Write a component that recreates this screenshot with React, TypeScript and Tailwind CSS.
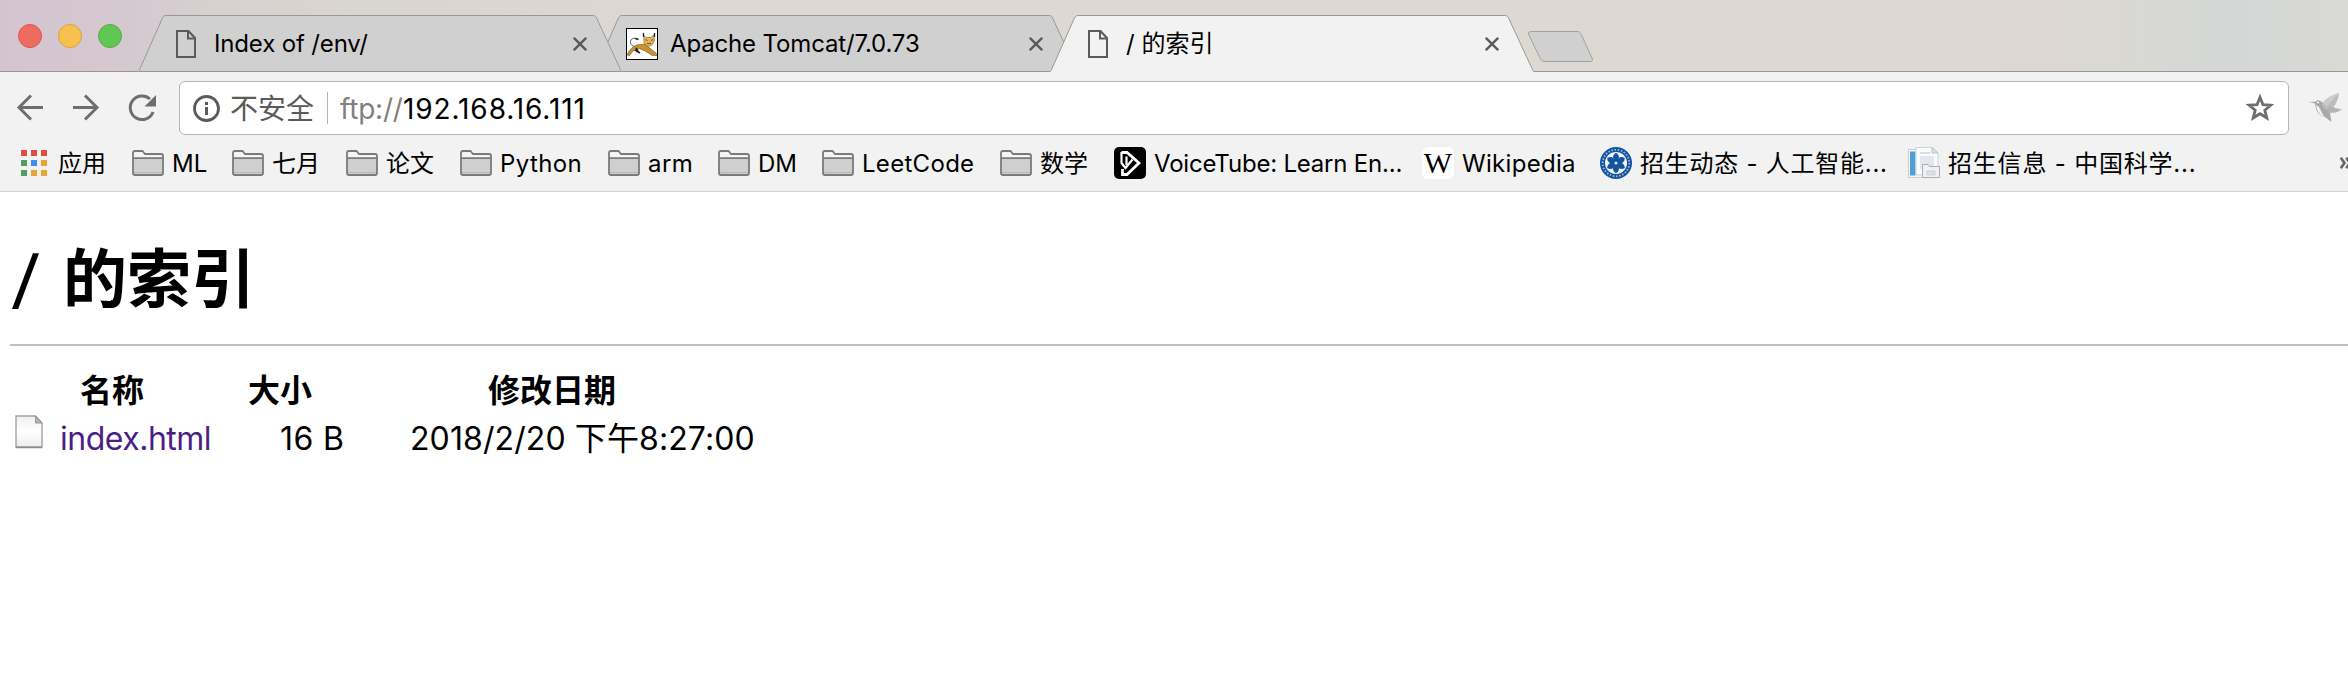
import type { ReactNode } from "react";

function PageIcon() {
  return (
    <svg className="ml-[6px] h-[28px] w-[20px] shrink-0" viewBox="0 0 20 28" fill="none" stroke="#5a5a5a" strokeWidth="2">
      <path d="M1 1H12.500L19 8V27H1Z" />
      <path d="M12 1V8.500H19" />
    </svg>
  );
}

function CloseIcon() {
  return (
    <svg className="h-[14px] w-[14px] shrink-0" viewBox="0 0 14 14" stroke="#5a5a5a" strokeWidth="2.4">
      <path d="M.8.8 13.2 13.2M13.2.8.8 13.2" />
    </svg>
  );
}

function TomcatIcon() {
  return (
    <svg className="h-[32px] w-[32px] shrink-0" viewBox="0 0 32 32">
      <rect x=".5" y=".5" width="31" height="31" fill="#fff" stroke="#000" />
      <path d="M1 27C3 22 8 16.500 14 16.500L19 16 23 19.500 30 25 31 27.500H26L20 23.500 13 20.500 7 23 3.500 27.500Z" fill="#c8922e" stroke="#5b4526" strokeWidth=".5" />
      <path d="M17.500 7 20 9.500H25L28 6.500 28.500 13 26 17 22 18.500 18 15Z" fill="#e6b450" stroke="#6b5330" strokeWidth=".5" />
      <path d="M17.500 5V9M28.500 5V9" stroke="#222" strokeWidth="1.300" />
      <path d="M19.500 11.500l2 1M27 11.500l-2 1M21 15.500h4" stroke="#5f4a20" strokeWidth=".9" />
      <path d="M11.500 11C8 9 4 11 4.500 14.500S8 18 8.500 18.500" fill="none" stroke="#555" strokeWidth="1" />
      <path d="M9.500 10.500 12.500 11.500M9 22l5 3M10 20l2 3" stroke="#222" strokeWidth="1.600" />
    </svg>
  );
}

type TabProps = { icon: ReactNode; title: string; active?: boolean; tracking: string; layer: string };

function Tab({ icon, title, active, tracking, layer }: TabProps) {
  return (
    <div className={`relative -mr-[28px] h-[57px] w-[484px] shrink-0 ${layer}`}>
      <svg className="absolute inset-0 h-[57px] w-[484px]" viewBox="0 0 484 57">
        <path
          d="M0 56.500C1 56 1.500 55 2 53.500L24 4C25 1.500 26 .5 28 .5H455C457 .5 458 1.500 459 4L482 53.500C482.500 55 483 56 484 56.500V57H0Z"
          fill={active ? "#f2f2f2" : "#d0d0d0"}
        />
        <path
          d="M0 56.500C1 56 1.500 55 2 53.500L24 4C25 1.500 26 .5 28 .5H455C457 .5 458 1.500 459 4L482 53.500C482.500 55 483 56 484 56.500"
          fill="none"
          stroke="#9b9894"
        />
        <path d="M1 56.500H483" stroke={active ? "#f2f2f2" : "#9a958f"} />
      </svg>
      <div className="relative flex h-[57px] items-center pr-[35px] pl-[32px]">
        <div className="flex w-[44px] shrink-0 justify-start">{icon}</div>
        <span className={`flex-1 whitespace-pre text-[24px] leading-[30px] ${tracking}`}>{title}</span>
        <CloseIcon />
      </div>
    </div>
  );
}

function Folder() {
  return (
    <svg className="h-[26px] w-[32px]" viewBox="0 0 32 26">
      <path d="M1 23V3Q1 1 3 1H10.500L13 4H29Q31 4 31 6V23Q31 25 29 25H3Q1 25 1 23Z" fill="#f4f4f4" />
      <path d="M1 8H31V23Q31 25 29 25H3Q1 25 1 23Z" fill="#cfcfcf" />
      <path d="M2 22.500H30" stroke="#b8b8b8" />
      <path d="M1 23V3Q1 1 3 1H10.500L13 4H29Q31 4 31 6V23Q31 25 29 25H3Q1 25 1 23ZM1 8.200H31" fill="none" stroke="#7a7a7a" strokeWidth="1.800" />
    </svg>
  );
}

function AppsIcon() {
  const colors = ["#e64b3f", "#e64b3f", "#e64b3f", "#529d5f", "#3f8cf4", "#e9a535", "#529d5f", "#e9a535", "#e9a535"];
  return (
    <svg className="h-[26px] w-[28px]" viewBox="0 0 28 26">
      {colors.map((c, i) => (
        <rect key={i} x={1 + (i % 3) * 10} y={Math.floor(i / 3) * 10} width="6" height="6" fill={c} />
      ))}
    </svg>
  );
}

function VoiceTubeIcon() {
  return (
    <svg className="h-[32px] w-[32px]" viewBox="0 0 32 32">
      <rect width="32" height="32" rx="5" fill="#000" />
      <path d="M7.500 5.500H13L25 16 13 27.500H8.500V22" fill="none" stroke="#fff" strokeWidth="2.800" />
      <path d="M7.500 5V16L11.500 21 18.500 12.500M12.500 9.500V18" fill="none" stroke="#fff" strokeWidth="2.200" />
    </svg>
  );
}

function WikipediaIcon() {
  return (
    <div className="flex h-[32px] w-[32px] items-center justify-center rounded-[6px] bg-white">
      <span className="font-['Liberation_Serif',serif] text-[30px] leading-[32px]">W</span>
    </div>
  );
}

function AcademyIcon() {
  return (
    <svg className="h-[32px] w-[32px]" viewBox="0 0 32 32">
      <circle cx="16" cy="16" r="16" fill="#1453a0" />
      <circle cx="16" cy="16" r="13.300" fill="none" stroke="#9dbbe0" strokeWidth="1.800" strokeDasharray="1.500 1.700" />
      <circle cx="16" cy="16" r="11" fill="#f4f8fd" />
      {[0, 60, 120, 180, 240, 300].map((a) => (
        <path key={a} d="M16 15C12 12 12 8.500 16 5.800C20 8.500 20 12 16 15Z" fill="#1453a0" transform={`rotate(${a} 16 16)`} />
      ))}
      <circle cx="16" cy="16" r="3.400" fill="#1453a0" />
      <circle cx="16" cy="16" r="1.600" fill="#cfe0f4" />
    </svg>
  );
}

function PagesIcon() {
  return (
    <svg className="h-[32px] w-[32px]" viewBox="0 0 32 32">
      <rect x=".5" y="2.500" width="24" height="28" fill="#f5f6f8" stroke="#c9ccd2" />
      <rect x="2" y="4.500" width="5.500" height="24" fill="#4e9fd6" />
      <path d="M8 .5H24L30 6V28H8Z" fill="#fafbfc" stroke="#cfd2d8" />
      <path d="M24 .5V6H30Z" fill="#dfe2e7" stroke="#b4b8c0" strokeWidth=".8" />
      <rect x="12" y="9" width="14" height="13" fill="#e3e7ee" />
      <path d="M12 6h10" stroke="#d9dde4" strokeWidth="2" />
      <path d="M14.500 30.500V17.500H20L21.500 19.500H31.500V30.500Z" fill="#eff1f5" stroke="#a9aeb8" />
      <rect x="19" y="24" width="8" height="4" fill="#dde1e8" stroke="#c4c9d2" strokeWidth=".7" />
    </svg>
  );
}

type Mark = { icon: ReactNode; label: string; box: string; tracking?: string };

const marks: Mark[] = [
  { icon: <AppsIcon />, label: "应用", box: "w-[112px] gap-[10px]" },
  { icon: <Folder />, label: "ML", box: "w-[100px] gap-2" },
  { icon: <Folder />, label: "七月", box: "w-[114px] gap-2" },
  { icon: <Folder />, label: "论文", box: "w-[114px] gap-2" },
  { icon: <Folder />, label: "Python", box: "w-[148px] gap-2", tracking: "tracking-[0.4px]" },
  { icon: <Folder />, label: "arm", box: "w-[110px] gap-2", tracking: "tracking-[0.4px]" },
  { icon: <Folder />, label: "DM", box: "w-[104px] gap-2" },
  { icon: <Folder />, label: "LeetCode", box: "w-[178px] gap-2", tracking: "tracking-[0.3px]" },
  { icon: <Folder />, label: "数学", box: "w-[114px] gap-2" },
  { icon: <VoiceTubeIcon />, label: "VoiceTube: Learn En...", box: "w-[308px] gap-2", tracking: "tracking-[-0.2px]" },
  { icon: <WikipediaIcon />, label: "Wikipedia", box: "w-[178px] gap-2", tracking: "tracking-[0.3px]" },
  { icon: <AcademyIcon />, label: "招生动态 - 人工智能...", box: "w-[308px] gap-2", tracking: "tracking-[0.75px]" },
  { icon: <PagesIcon />, label: "招生信息 - 中国科学...", box: "w-[432px] gap-2", tracking: "tracking-[0.8px]" },
];

function TabStrip() {
  return (
    <div className="flex h-[72px] items-start bg-[linear-gradient(90deg,#d4c4d0_0px,#d5c9d0_130px,#d8d3d0_260px,#dad6cf_420px,#ddd8d2_700px,#ddd8d1_1500px,#ddd8d3_1900px,#dcd8d1_2050px,#d8d8d4_2140px,#d4d7d6_2230px,#d9d9d5_2348px)] shadow-[inset_0_-1px_0_#9a958f]">
      <div className="flex w-[138px] shrink-0 gap-4 pt-[24px] pl-[18px]">
        <div className="h-6 w-6 rounded-full border border-[#d8564b] bg-[#ee6b60]" />
        <div className="h-6 w-6 rounded-full border border-[#dba33c] bg-[#f6c14f]" />
        <div className="h-6 w-6 rounded-full border border-[#4fae42] bg-[#62c655]" />
      </div>
      <div className="isolate flex pt-[15px]">
        <Tab icon={<PageIcon />} title="Index of /env/" tracking="tracking-[-0.15px]" layer="z-20" />
        <Tab icon={<TomcatIcon />} title="Apache Tomcat/7.0.73" tracking="tracking-[-0.15px]" layer="z-10" />
        <Tab icon={<PageIcon />} title="/ 的索引" tracking="tracking-normal" layer="z-30" active />
      </div>
      <svg className="mt-[30px] ml-[21px] h-[34px] w-[68px]" viewBox="0 0 68 34">
        <path d="M5 1.500H50C52 1.500 53 2 54 4L65 28C66 30.500 65.500 31.500 63.500 31.500H18C15 31.500 14 30.500 13 28L1.500 4C1 2.500 2 1.500 5 1.500Z" fill="#d0d0d0" stroke="#a3a19e" />
      </svg>
    </div>
  );
}

function Toolbar() {
  return (
    <div className="flex h-[63px] items-start bg-[#f2f2f2] pt-[9px]">
      <div className="flex w-[179px] shrink-0 items-center pt-[11px] pl-[15px]">
        <svg className="h-[32px] w-[144px]" viewBox="0 0 144 32" fill="none" stroke="#6e6e6e" strokeWidth="3">
          <path d="M28 15.500H4M16 3.500 4 15.500 16 27.500" />
          <path d="M58 15.500H82M70 3.500 82 15.500 70 27.500" />
          <path d="M138.100 20A11.800 11.800 0 1 1 135 7" />
          <path d="M141 3V14.500H129.500Z" fill="#6e6e6e" stroke="none" />
        </svg>
      </div>
      <div className="flex h-[54px] w-[2110px] shrink-0 items-center rounded-[6px] border border-[#b6b6b6] bg-white pr-[14px] pl-[13px] text-[28px] leading-[34px]">
        <svg className="h-[28px] w-[28px] shrink-0" viewBox="0 0 28 28" fill="none" stroke="#5a5a5a">
          <circle cx="13.500" cy="14.500" r="12" strokeWidth="2.800" />
          <path d="M13.500 13V21M13.500 8V11" strokeWidth="3" />
        </svg>
        <span className="mt-[2px] ml-[9px] w-[97px] text-[#5a5a5a]">不安全</span>
        <span className="h-[32px] w-px shrink-0 bg-[#b4b4b4]" />
        <span className="mt-[2px] ml-3 w-[63px] tracking-[-0.2px] text-[#808080]">ftp://</span>
        <span className="mt-[2px] flex-1 tracking-[0.9px]">192.168.16.111</span>
        <svg className="h-[30px] w-[30px]" viewBox="0 0 30 30" fill="none" stroke="#6e6e6e" strokeWidth="2.800">
          <path d="M16 4.300 18.900 11.600 26.900 12.100 20.800 17.200 22.800 25 16 20.700 9.200 25 11.200 17.200 5.100 12.100 13.100 11.600Z" />
        </svg>
      </div>
      <svg className="mt-[11px] ml-[20px] h-[32px] w-[34px]" viewBox="0 0 34 32">
        <path d="M0 10 7 9.500Q10 7 13.500 10.500L17 14 25 14 24 19 21 21 22.500 30 16 25Q9 23 7 17L6 11.500Z" fill="#a9a9a9" />
        <path d="M7 13Q8 22 15 24.500Q12 19 10 15Z" fill="#f4f4f4" />
        <path d="M13 13Q17 5 30 1Q29 10 24 15.500L17 18Z" fill="#bdbdbd" />
        <path d="M20 14.500 33 17.500 27 20.500 19 21Z" fill="#b3b3b3" />
        <path d="M14 10Q19 4 30 1L18 14Z" fill="#cccccc" />
        <circle cx="9" cy="10.500" r="1.600" fill="#fff" stroke="#8a8a8a" strokeWidth=".8" />
      </svg>
    </div>
  );
}

function BookmarksBar() {
  return (
    <div className="flex h-[57px] items-center overflow-hidden border-b border-[#d2d2d2] bg-[#f2f2f2] pl-5 text-[24px] leading-[30px] whitespace-pre">
      {marks.map((m) => (
        <div key={m.label} className={`flex shrink-0 items-center ${m.box}`}>
          <span className="shrink-0">{m.icon}</span>
          <span className={`pt-px ${m.tracking ?? ""}`}>{m.label}</span>
        </div>
      ))}
      <svg className="h-[12px] w-[12px] shrink-0" viewBox="0 0 12 12" fill="none" stroke="#666" strokeWidth="2.600">
        <path d="M.8 .8 4.500 6 .8 11.200M6.300 .8 10 6 6.300 11.200" />
      </svg>
    </div>
  );
}

function FileIcon() {
  return (
    <svg className="h-[34px] w-[28px]" viewBox="0 0 28 34">
      <defs>
        <linearGradient id="sheet" x1="0" y1="0" x2="0" y2="1">
          <stop offset="0" stopColor="#efefef" />
          <stop offset=".5" stopColor="#fff" />
          <stop offset="1" stopColor="#ececec" />
        </linearGradient>
      </defs>
      <path d="M1 1H20.500L27 8V32H1Z" fill="url(#sheet)" stroke="#a2a2a2" strokeWidth="1.400" />
      <path d="M20.500 1V8H27Z" fill="#b5b5b5" stroke="#8c8c8c" strokeWidth=".8" />
      <path d="M1 32.500H27" stroke="#8a8a8a" strokeWidth="1.500" />
    </svg>
  );
}

function Listing() {
  return (
    <main className="bg-white pl-[10px] text-[32px]">
      <h1 className="flex pt-[47px] pl-[2px] text-[64px] leading-[80px] font-bold">
        <span className="w-[51px] -skew-x-6 pl-[2px] font-medium">/</span>
        <span>的索引</span>
      </h1>
      <hr className="mt-[25px] h-[2px] border-0 bg-[#bfbfbf]" />
      <div className="grid grid-cols-[70px_168px_240px_300px] pt-[25px] leading-[40px] font-bold">
        <span />
        <span>名称</span>
        <span>大小</span>
        <span>修改日期</span>
      </div>
      <div className="grid h-[56px] grid-cols-[50px_220px_130px_400px] items-center leading-[40px] whitespace-pre">
        <span className="-mt-[14px] pl-[5px]">
          <FileIcon />
        </span>
        <a className="tracking-[-0.5px] text-[#4a1f86]">index.html</a>
        <span className="tracking-[0.4px]">16 B</span>
        <span className="tracking-[0.1px]">2018/2/20 下午8:27:00</span>
      </div>
    </main>
  );
}

export default function App() {
  return (
    <div className="h-[674px] w-[2348px] overflow-hidden bg-white font-['Inter','Noto_Sans_CJK_SC',sans-serif] text-black">
      <TabStrip />
      <Toolbar />
      <BookmarksBar />
      <Listing />
    </div>
  );
}
